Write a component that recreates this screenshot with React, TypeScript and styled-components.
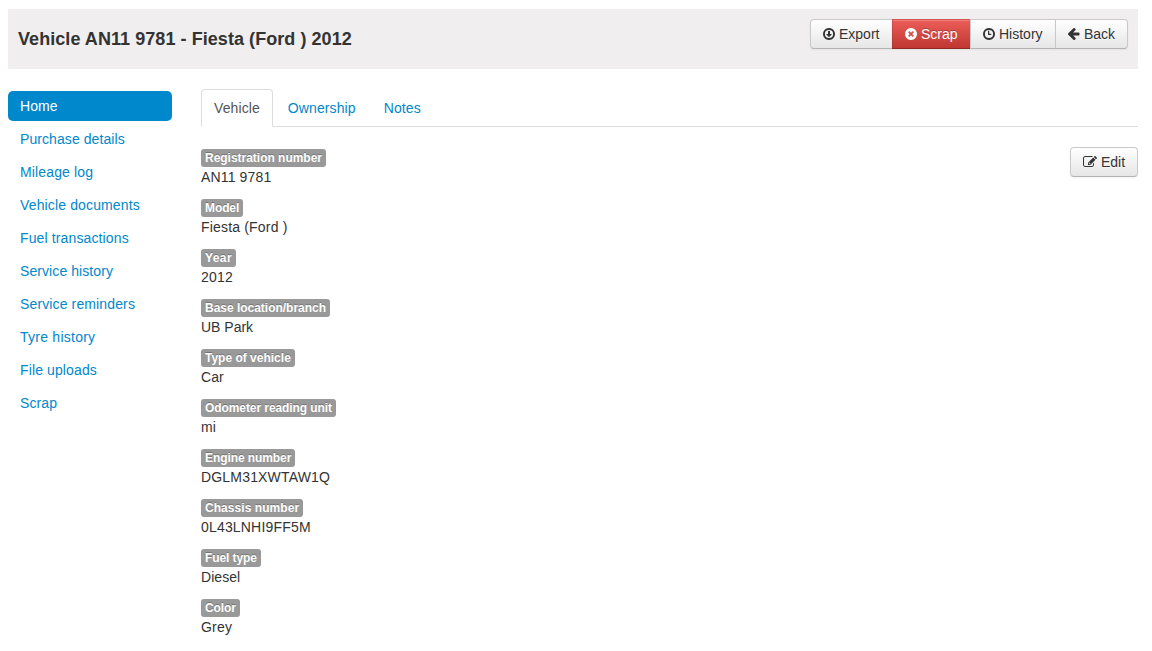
import React from 'react';
import styled, { createGlobalStyle, css } from 'styled-components';

const GlobalStyle = createGlobalStyle`
  * { box-sizing: border-box; }
  body {
    margin: 0;
    background: #fff;
    color: #333;
    font-family: "Liberation Sans", Arial, sans-serif;
    font-size: 14px;
    line-height: 20px;
  }
`;

const Page = styled.div`
  width: 1130px;
  height: 651px;
  margin-left: 8px;
  padding-top: 9px;
  overflow: hidden;
`;

const Header = styled.header`
  display: flex;
  justify-content: space-between;
  height: 60px;
  padding: 10px;
  background: #f0eeee;
`;

const Title = styled.h1`
  margin: 0;
  font-size: 18px;
  line-height: 40px;
  font-weight: bold;
  letter-spacing: 0.06px;
  white-space: nowrap;
`;

const Group = styled.div`
  display: flex;
  height: 30px;
`;

const Button = styled.button<{ $danger?: boolean; $width: number }>`
  display: flex;
  align-items: center;
  flex: none;
  width: ${p => p.$width}px;
  height: 30px;
  padding: 0 0 0 12px;
  border: 1px solid #ccc;
  border-color: #c9c9c9 #c9c9c9 #b3b3b3;
  border-radius: 4px;
  background: linear-gradient(to bottom, #fff, #e6e6e6);
  box-shadow: inset 0 1px 0 rgba(255, 255, 255, 0.2), 0 1px 2px rgba(0, 0, 0, 0.05);
  color: #333;
  font: 14px/20px "Liberation Sans", Arial, sans-serif;
  text-shadow: 0 1px 1px rgba(255, 255, 255, 0.75);
  white-space: nowrap;

  ${Group} & { border-radius: 0; }
  ${Group} &:not(:first-child) { margin-left: -1px; }
  ${Group} &:first-child { border-radius: 4px 0 0 4px; }
  ${Group} &:last-child { border-radius: 0 4px 4px 0; }

  ${p => p.$danger && css`
    background: linear-gradient(to bottom, #ee5f5b, #bd362f) border-box;
    border-color: rgba(0, 0, 0, 0.1) rgba(0, 0, 0, 0.1) rgba(0, 0, 0, 0.25);
    color: #fff;
    text-shadow: 0 -1px 0 rgba(0, 0, 0, 0.25);
  `}
`;

const Glyph = styled.svg`
  flex: none;
  height: 14px;
  margin-right: 4px;
  fill: currentColor;
`;

const Body = styled.div`
  display: flex;
  gap: 29px;
`;

const Sidebar = styled.nav`
  display: flex;
  flex-direction: column;
  gap: 3px;
  width: 164px;
  padding-top: 22px;
`;

const NavItem = styled.a<{ $active?: boolean; $track: number }>`
  height: 30px;
  padding: 5px 12px;
  border-radius: 5px;
  letter-spacing: ${p => p.$track}px;
  color: ${p => (p.$active ? '#fff' : '#08c')};
  background: ${p => (p.$active ? '#08c' : 'transparent')};
`;

const Main = styled.main`
  flex: 1;
  padding-top: 20px;
`;

const Tabs = styled.div`
  display: flex;
  gap: 2px;
  height: 38px;
  border-bottom: 1px solid #ddd;
`;

const Tab = styled.a<{ $active?: boolean }>`
  height: 38px;
  padding: 8px 12px;
  border: 1px solid transparent;
  border-radius: 4px 4px 0 0;
  letter-spacing: 0.1px;
  color: #08c;
  ${p => p.$active && css`
    color: #555;
    background: #fff;
    border-color: #ddd #ddd transparent;
  `}
`;

const Panel = styled.div`
  display: flex;
  justify-content: space-between;
  align-items: flex-start;
  padding-top: 20px;
`;

const Fields = styled.dl`
  display: flex;
  flex-direction: column;
  gap: 10px;
  margin: 0;
`;

const Field = styled.div`
  height: 40px;
`;

const Label = styled.dt<{ $track: number }>`
  width: fit-content;
  height: 18px;
  margin-top: 2px;
  padding: 2px 4px;
  border-radius: 3px;
  background: #999;
  color: #fff;
  font-size: 12px;
  font-weight: bold;
  line-height: 14px;
  letter-spacing: ${p => p.$track}px;
  text-shadow: 0 -1px 0 rgba(0, 0, 0, 0.25);
  white-space: nowrap;
`;

const Value = styled.dd<{ $track: number }>`
  margin: 0;
  line-height: 20px;
  letter-spacing: ${p => p.$track}px;
`;

const CIRCLE = 'M1536 640q0 -209 -103 -385.5t-279.5 -279.5t-385.5 -103t-385.5 103t-279.5 279.5t-103 385.5t103 385.5t279.5 279.5t385.5 103t385.5 -103t279.5 -279.5t103 -385.5z';
const RING = CIRCLE + 'M768 1164a524 524 0 0 1 0 -1048a524 524 0 0 1 0 1048z';

const PATHS = {
  download: RING + 'M1120 608q0 -12 -10 -24l-319 -319q-11 -9 -23 -9t-23 9l-320 320q-9 9 -9 23q0 14 9 23t23 9h192v352q0 13 9.500 22.500t22.500 9.500h192q13 0 22.500 -9.500t9.500 -22.500v-352h192q14 0 23 -9t9 -23z',
  remove: CIRCLE + 'M768 790l220 220l150 -150l-220 -220l220 -220l-150 -150l-220 220l-220 -220l-150 150l220 220l-220 220l150 150z',
  clock: RING + 'M640 1024v-480q0 -14 9 -23t23 -9h352q14 0 23 9t9 23v96q0 14 -9 23t-23 9h-224v352q0 14 -9 23t-23 9h-96q-14 0 -23 -9t-9 -23z',
  arrow: 'M1472 704v-128q0 -53 -32.500 -90.500t-84.500 -37.500h-704l293 -294q38 -36 38 -90t-38 -90l-75 -76q-37 -37 -90 -37q-52 0 -91 37l-651 652q-37 37 -37 90q0 52 37 91l651 650q38 38 91 38q52 0 90 -38l75 -74q38 -38 38 -91t-38 -91l-293 -293h704q52 0 84.500 -37.500t32.500 -90.500z',
  edit: 'M888 352l80 80l-152 152l-80 -80v-56h96v-96h56zM1408 478v-190q0 -119 -84.500 -203.500t-203.500 -84.500h-832q-119 0 -203.500 84.500t-84.500 203.500v832q0 119 84.500 203.500t203.500 84.500h832q63 0 117 -25q15 -7 18 -23q3 -17 -9 -29l-49 -49q-14 -14 -32 -8q-23 6 -45 6h-832q-66 0 -113 -47t-47 -113v-832q0 -66 47 -113t113 -47h832q66 0 113 47t47 113v126q0 13 9 22l64 64q15 15 35 7t20 -29zM1312 1216l288 -288l-672 -672h-288v288zM1756 1084l-92 -92l-288 288l92 92q28 28 68 28t68 -28l152 -152q28 -28 28 -68t-28 -68z',
};

function Icon({ name, units = 1536 }: { name: keyof typeof PATHS; units?: number }) {
  return (
    <Glyph viewBox={`0 0 ${units} 1792`} width={units / 128} aria-hidden="true">
      <path transform="translate(0 1536) scale(1 -1)" fillRule="evenodd" d={PATHS[name]} />
    </Glyph>
  );
}

// Each entry carries its own letter spacing.
const NAV: [string, number][] = [
  ['Home', 0.1],
  ['Purchase details', 0.08],
  ['Mileage log', 0.14],
  ['Vehicle documents', 0.14],
  ['Fuel transactions', 0.13],
  ['Service history', 0.08],
  ['Service reminders', 0.13],
  ['Tyre history', 0.25],
  ['File uploads', 0.12],
  ['Scrap', 0.1],
];

const FIELDS: [string, number, string, number][] = [
  ['Registration number', -0.02, 'AN11 9781', 0.15],
  ['Model', -0.1, 'Fiesta (Ford )', 0.18],
  ['Year', 0.4, '2012', 0.2],
  ['Base location/branch', -0.02, 'UB Park', 0],
  ['Type of vehicle', 0, 'Car', 0.1],
  ['Odometer reading unit', -0.08, 'mi', 0.1],
  ['Engine number', -0.08, 'DGLM31XWTAW1Q', 0.18],
  ['Chassis number', 0.06, '0L43LNHI9FF5M', 0.18],
  ['Fuel type', -0.08, 'Diesel', 0.05],
  ['Color', -0.08, 'Grey', 0.2],
];

export default function App() {
  return (
    <Page>
      <GlobalStyle />
      <Header>
        <Title>Vehicle AN11 9781 - Fiesta (Ford ) 2012</Title>
        <Group>
          <Button $width={83}><Icon name="download" />Export</Button>
          <Button $width={79} $danger><Icon name="remove" />Scrap</Button>
          <Button $width={86}><Icon name="clock" />History</Button>
          <Button $width={73}><Icon name="arrow" />Back</Button>
        </Group>
      </Header>
      <Body>
        <Sidebar>
          {NAV.map(([item, track], i) => (
            <NavItem key={item} $active={i === 0} $track={track}>{item}</NavItem>
          ))}
        </Sidebar>
        <Main>
          <Tabs>
            <Tab $active>Vehicle</Tab>
            <Tab>Ownership</Tab>
            <Tab>Notes</Tab>
          </Tabs>
          <Panel>
            <Fields>
              {FIELDS.map(([label, labelTrack, value, valueTrack]) => (
                <Field key={label}>
                  <Label $track={labelTrack}>{label}</Label>
                  <Value $track={valueTrack}>{value}</Value>
                </Field>
              ))}
            </Fields>
            <Button $width={68}><Icon name="edit" units={1792} />Edit</Button>
          </Panel>
        </Main>
      </Body>
    </Page>
  );
}
